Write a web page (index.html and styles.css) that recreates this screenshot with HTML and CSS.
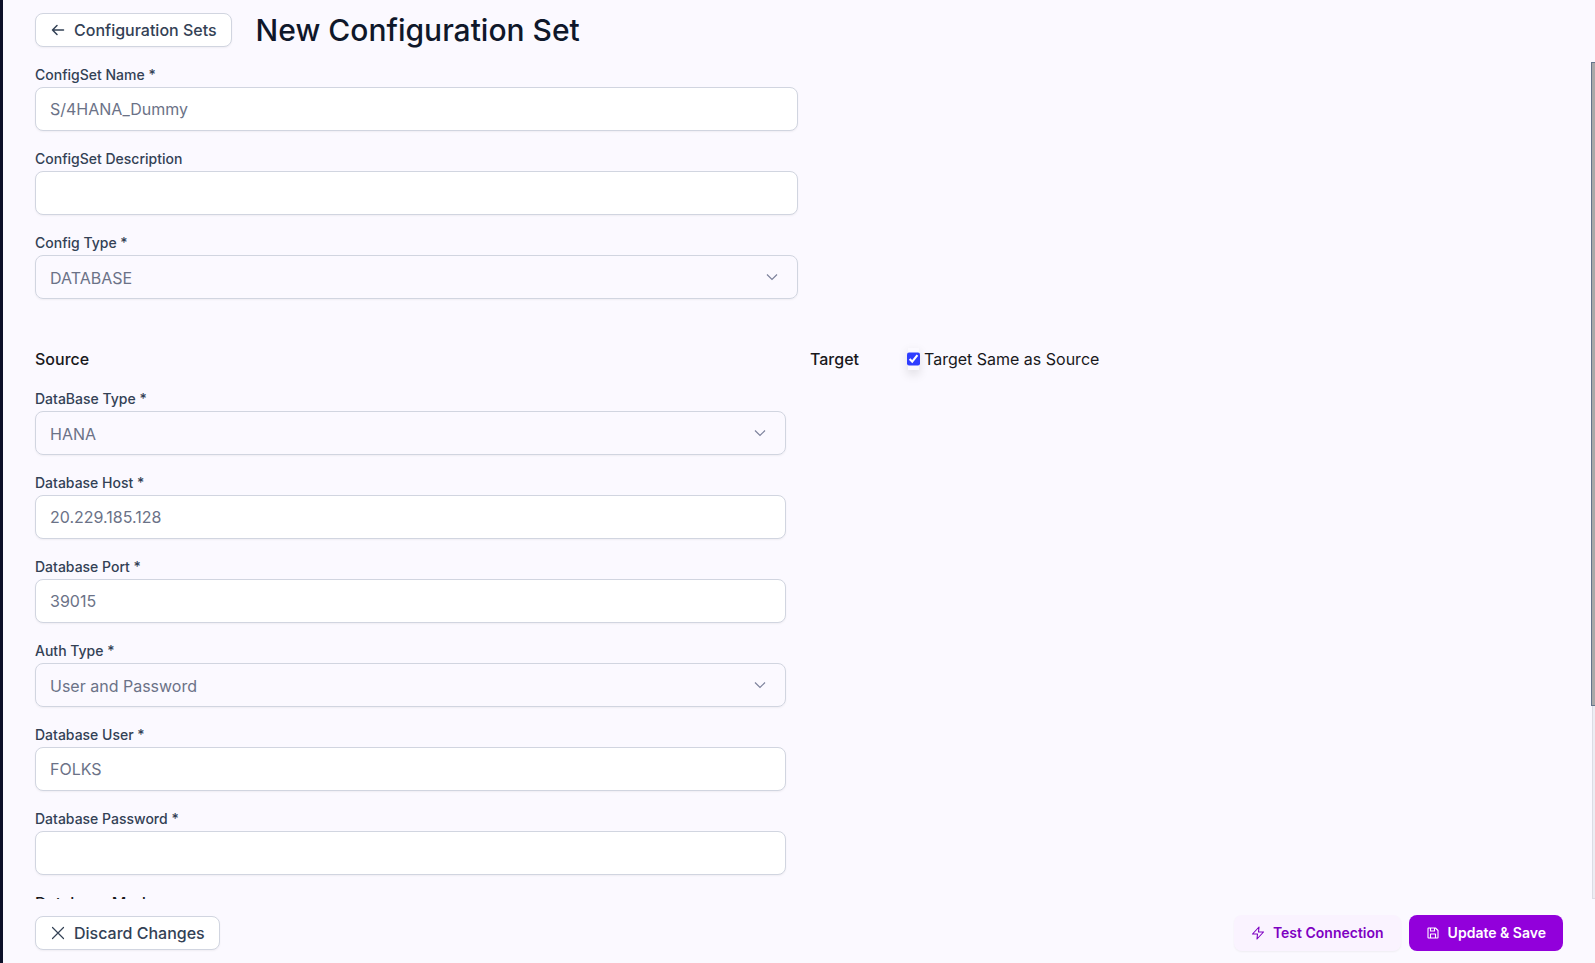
FILE: index.html
```
<!DOCTYPE html>
<html lang="en">
<head>
<meta charset="utf-8">
<title>New Configuration Set</title>
<link rel="stylesheet" href="styles.css">
</head>
<body>
<div class="app">
  <header class="header">
    <button type="button" class="btn btn-outline">
      <svg class="icon" viewBox="0 0 16 16" fill="none" stroke="currentColor" stroke-width="1.5" stroke-linecap="round" stroke-linejoin="round"><path d="M13.5 8H2.5M7 3.500 2.500 8 7 12.500"/></svg>
      Configuration Sets
    </button>
    <h1 class="title">New Configuration Set</h1>
  </header>

  <main class="main">
    <div class="scroller">
      <form class="form" id="config-form">
        <section class="fields fields-half">
          <div class="field">
            <label for="name">ConfigSet Name *</label>
            <input class="control" id="name" type="text" value="S/4HANA_Dummy">
          </div>
          <div class="field">
            <label for="description">ConfigSet Description</label>
            <input class="control" id="description" type="text">
          </div>
          <div class="field">
            <label for="config-type">Config Type *</label>
            <div class="select">
              <select class="control" id="config-type"><option>DATABASE</option></select>
              <svg class="chevron" viewBox="0 0 12 12" fill="none" stroke="currentColor" stroke-width="1.2"><path d="M1 3.500 6 8.500 11 3.500"/></svg>
            </div>
          </div>
        </section>

        <div class="columns">
          <section class="fields">
            <h2 class="section-title">Source</h2>
            <div class="field">
              <label for="db-type">DataBase Type *</label>
              <div class="select">
                <select class="control" id="db-type"><option>HANA</option></select>
                <svg class="chevron" viewBox="0 0 12 12" fill="none" stroke="currentColor" stroke-width="1.2"><path d="M1 3.500 6 8.500 11 3.500"/></svg>
              </div>
            </div>
            <div class="field">
              <label for="db-host">Database Host *</label>
              <input class="control" id="db-host" type="text" value="20.229.185.128">
            </div>
            <div class="field">
              <label for="db-port">Database Port *</label>
              <input class="control" id="db-port" type="text" value="39015">
            </div>
            <div class="field">
              <label for="auth-type">Auth Type *</label>
              <div class="select">
                <select class="control" id="auth-type"><option>User and Password</option></select>
                <svg class="chevron" viewBox="0 0 12 12" fill="none" stroke="currentColor" stroke-width="1.2"><path d="M1 3.500 6 8.500 11 3.500"/></svg>
              </div>
            </div>
            <div class="field">
              <label for="db-user">Database User *</label>
              <input class="control" id="db-user" type="text" value="FOLKS">
            </div>
            <div class="field">
              <label for="db-password">Database Password *</label>
              <input class="control" id="db-password" type="password">
            </div>
            <div class="field field-mode">Database Mode</div>
          </section>
          <section class="target">
            <h2 class="section-title">Target</h2>
            <label class="same"><input type="checkbox" class="check" checked>Target Same as Source</label>
          </section>
        </div>
      </form>
    </div>
    <div class="scrollbar"><div class="thumb"></div></div>
  </main>

  <footer class="footer">
    <button type="button" class="btn btn-outline">
      <svg class="icon" viewBox="0 0 16 16" fill="none" stroke="currentColor" stroke-width="1.2" stroke-linecap="round"><path d="M2.500 2.500 13.500 13.500M13.500 2.500 2.500 13.500"/></svg>
      Discard Changes
    </button>
    <div class="actions">
      <button type="button" class="btn btn-action btn-soft">
        <svg class="icon-small" viewBox="0 0 14 14" fill="none" stroke="currentColor" stroke-width="1.1" stroke-linejoin="round"><path d="M8 1 1.500 8H6.500L6 13 12.500 6H7.500Z"/></svg>
        Test Connection
      </button>
      <button type="submit" form="config-form" class="btn btn-action btn-primary">
        <svg class="icon-small" viewBox="0 0 14 14" fill="none" stroke="currentColor" stroke-width="1.1" stroke-linejoin="round"><path d="M2.500 2H9.500L12 4.500V11.500Q12 12 11.500 12H2.500Q2 12 2 11.500V2.500Q2 2 2.500 2ZM4.500 12V8H9.500V12M4.500 2V5H8.500V2"/></svg>
        Update &amp; Save
      </button>
    </div>
  </footer>
</div>
</body>
</html>
```

FILE: styles.css
```
* { box-sizing: border-box; }

body {
  margin: 0;
  background: #fbf9ff;
  color: #18181b;
  font-family: Inter, "Liberation Sans", sans-serif;
  font-size: 16px;
  line-height: 24px;
}

h1, h2 { margin: 0; }
button, input, select { font: inherit; }

.app {
  display: flex;
  flex-direction: column;
  height: 100vh;
  border-left: 3px solid #0c1029;
}

.header {
  display: flex;
  align-items: center;
  gap: 24px;
  padding: 12px 32px 14px;
}

.title {
  color: #0f172a;
  font-size: 30px;
  font-weight: 500;
  line-height: 36px;
}

.btn {
  display: flex;
  align-items: center;
  cursor: pointer;
}

.btn-outline {
  gap: 8px;
  height: 34px;
  padding: 0 14px;
  border: 1px solid #d1d5e0;
  border-radius: 8px;
  background: #fff;
  color: #334155;
  font-weight: 500;
  box-shadow: 0 1px 2px rgba(0, 0, 0, 0.05);
}

.icon { width: 16px; height: 16px; }
.icon-small { width: 14px; height: 14px; }

.main {
  position: relative;
  flex: 1;
  min-height: 0;
}

.scroller {
  height: 100%;
  overflow-y: auto;
  scrollbar-width: none;
}

.scrollbar {
  position: absolute;
  top: 0;
  right: 0;
  bottom: 0;
  width: 3px;
  border-left: 1px solid #dcdce4;
  border-bottom: 1px solid #dcdce4;
  background: #ededf3;
}

.thumb {
  position: absolute;
  top: 0;
  right: 0;
  width: 4px;
  height: 77%;
  border: 1px solid #64748b;
  border-right: 0;
  background: #a9a9a9;
}

.form { padding: 3px 34px 0 32px; }

.fields {
  display: flex;
  flex-direction: column;
  gap: 18px;
}

.fields-half { width: 50%; }

.field {
  display: flex;
  flex-direction: column;
  gap: 2px;
  color: #334155;
  font-size: 14px;
  font-weight: 500;
  line-height: 20px;
}

.field-mode {
  min-height: 257px;
  color: #18181b;
  font-size: 16px;
}

.control {
  width: 100%;
  height: 44px;
  padding: 0 14px;
  border: 1px solid #d1d5e0;
  border-radius: 8px;
  background: #fff;
  color: #6b7287;
  font-size: 16px;
  font-weight: 400;
  line-height: 24px;
  box-shadow: 0 1px 2px rgba(0, 0, 0, 0.05);
}

.select {
  position: relative;
}

.select .control {
  display: block;
  padding-top: 2px;
  background: transparent;
  appearance: none;
}

.chevron {
  position: absolute;
  top: 16px;
  right: 20px;
  width: 12px;
  height: 12px;
  color: #7c829c;
  pointer-events: none;
}

.columns {
  display: grid;
  grid-template-columns: 1fr 1fr;
  gap: 24px;
  margin-top: 48px;
}

.section-title {
  font-size: 16px;
  font-weight: 500;
  line-height: 24px;
}

.target {
  display: flex;
  align-items: flex-start;
  gap: 48px;
}

.same {
  display: flex;
  align-items: center;
  gap: 4px;
}

.check {
  width: 13px;
  height: 24px;
  margin: 0;
  background: #fff;
  accent-color: #2f3dff;
  box-shadow: 0 4px 10px rgba(0, 0, 0, 0.1);
}

.footer {
  display: flex;
  align-items: center;
  justify-content: space-between;
  padding: 16px 32px 12px;
}

.actions {
  display: flex;
  gap: 8px;
}

.btn-action {
  gap: 8px;
  height: 36px;
  padding: 0 17px;
  border: 0;
  border-radius: 8px;
  font-size: 14px;
  font-weight: 600;
}

.btn-soft {
  background: #faf3ff;
  color: #7e00c2;
  box-shadow: 0 1px 2px rgba(0, 0, 0, 0.05);
}

.btn-primary {
  background: #9200db;
  color: #fff;
}
```
